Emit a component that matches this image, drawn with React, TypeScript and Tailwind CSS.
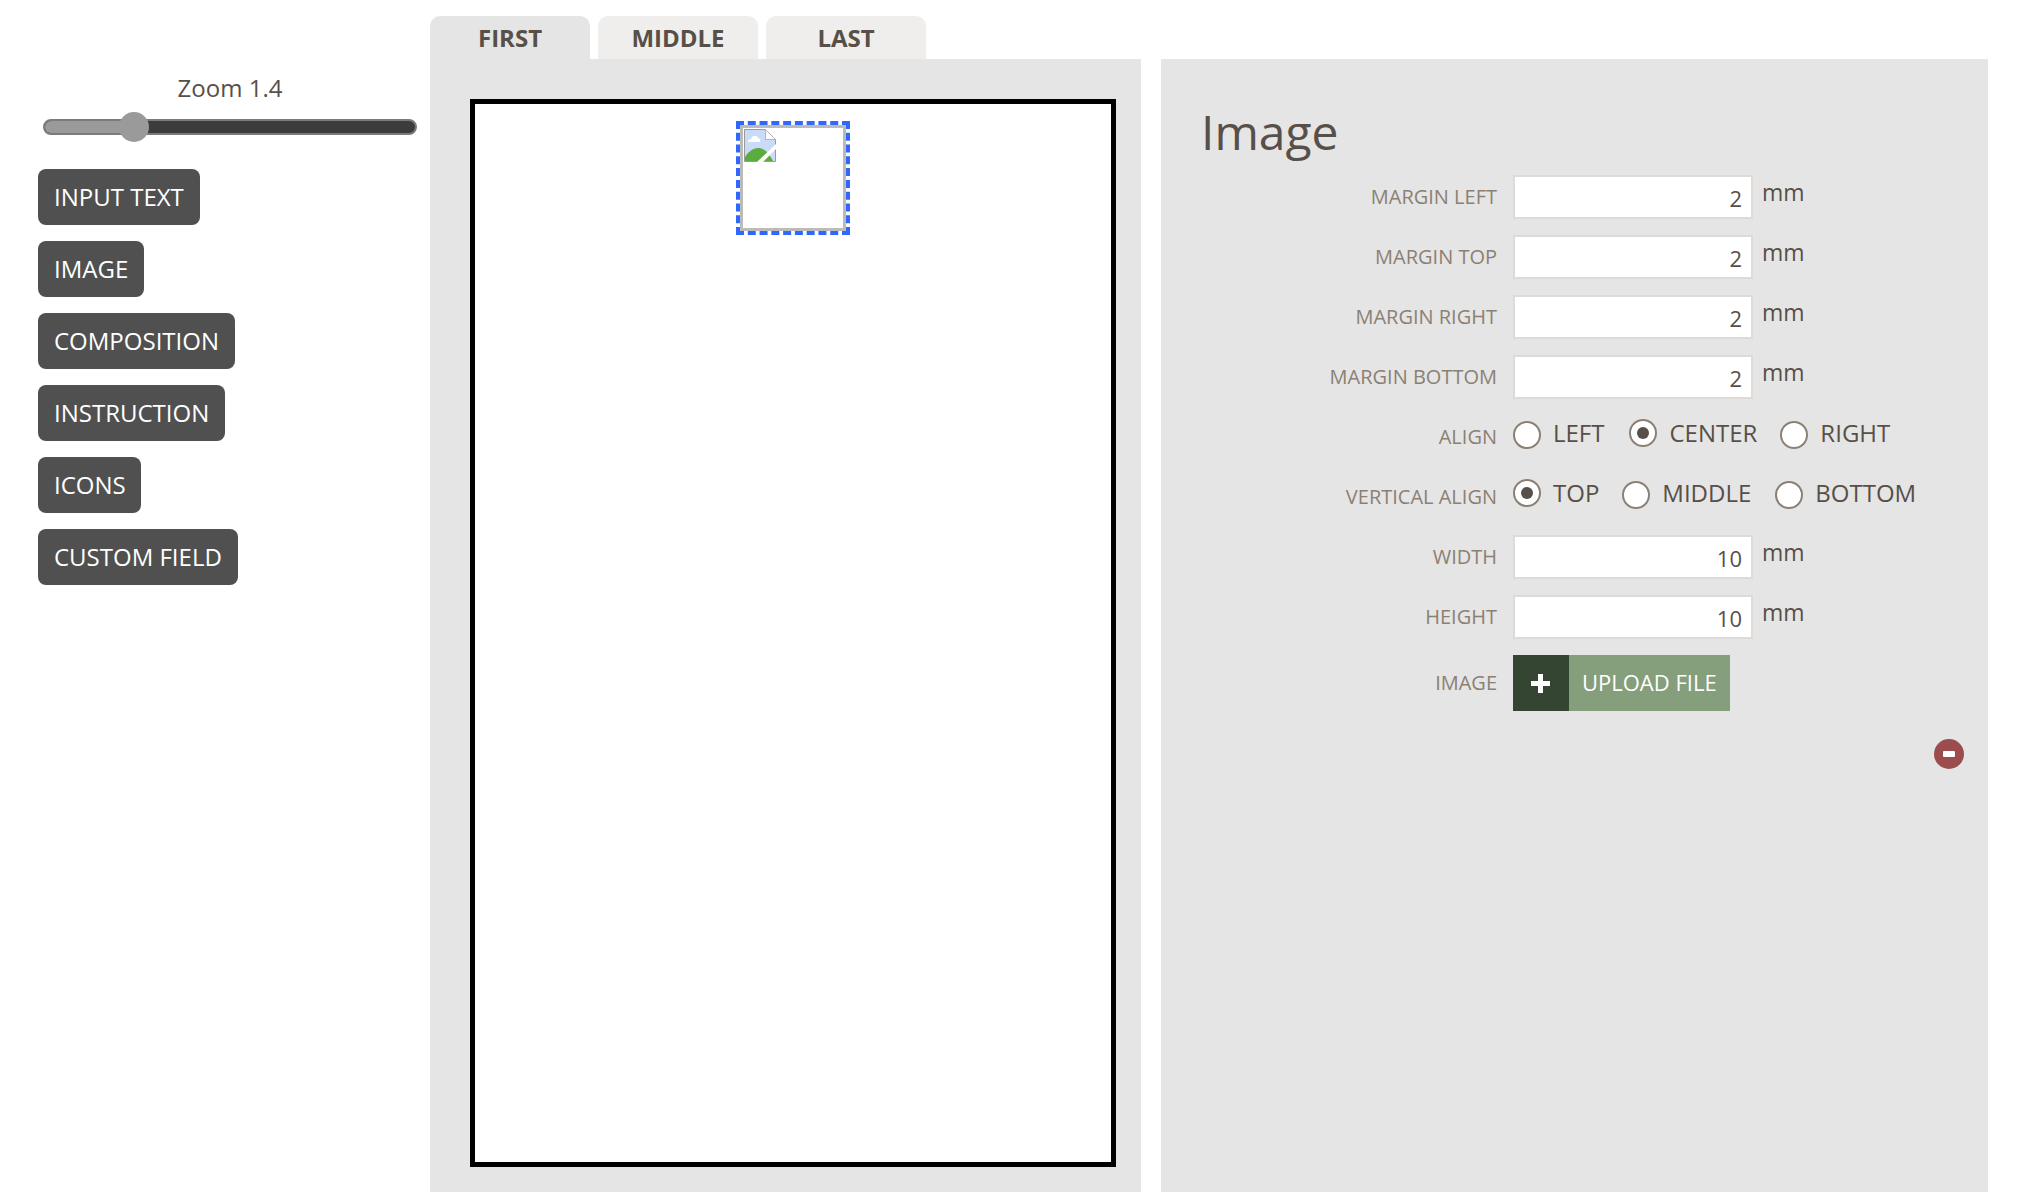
const font = "font-['Open_Sans',sans-serif]";

const SideButton = ({ label, w }: { label: string; w: string }) => (
  <button className={`${w} h-14 rounded-lg bg-[#4f504f] pl-4 text-left text-[24px] text-white`}>{label}</button>
);

const Tab = ({ label, active }: { label: string; active?: boolean }) => (
  <div className={`h-[43px] w-[160px] rounded-t-[10px] text-center text-[24px] leading-[43px] font-bold text-[#574f48] ${active ? "bg-[#e5e5e5]" : "bg-[#efeeec]"}`}>
    {label}
  </div>
);

const Label = ({ text }: { text: string }) => (
  <span className="w-[228px] shrink-0 text-right text-[20px] text-[#8c8074]">{text}</span>
);

const NumberRow = ({ label, value }: { label: string; value: string }) => (
  <div className="flex h-[60px] items-start">
    <div className="flex h-[44px] items-center">
      <Label text={label} />
    </div>
    <input
      readOnly
      value={value}
      className="ml-4 h-[44px] w-[240px] border-2 border-[#dfdad6] bg-white pt-[2px] pr-[9px] text-right text-[22px] text-[#574f48] outline-none"
    />
    <span className="ml-[9px] text-[23px] leading-[34px] text-[#574f48]">mm</span>
  </div>
);

const Radio = ({ text, checked, gap }: { text: string; checked?: boolean; gap: string }) => (
  <div className={`flex items-center ${gap}`}>
    <span className={`flex size-[28px] items-center justify-center rounded-full border-2 border-[#8c8074] bg-white ${checked ? "-mt-[2px]" : "mt-[2px]"}`}>
      {checked && <span className="size-3 rounded-full bg-[#574f48]" />}
    </span>
    <span className="-mt-[2px] ml-[12px] text-[24px] leading-[28px] text-[#574f48]">{text}</span>
  </div>
);

const RadioRow = ({ label, children }: { label: string; children: React.ReactNode }) => (
  <div className="flex h-[60px] items-start">
    <div className="flex h-[28px] items-center pt-2">
      <Label text={label} />
    </div>
    <div className="ml-4 flex">{children}</div>
  </div>
);

const BrokenImage = () => (
  <svg width="32" height="33" viewBox="0 0 32 33" className="block">
    <path d="M.5.5h21l10 10v22H.5z" fill="#c9dbf6" stroke="#9a9a9a" strokeWidth="1" />
    <path d="M21.5.5v10h10z" fill="#fff" stroke="#b5b5b5" strokeWidth="1" />
    <path d="M1 32v-4c3-5 8-9 13-9 6 0 11 5 15 13z" fill="#5aac3f" />
    <path d="M4 13c0-2 1-3 3-3 1-4 6-4 7-1 2 0 3 2 2 4z" fill="#fff" />
    <path d="M13 33l19-18v5L19 33z" fill="#fff" />
  </svg>
);

export default function App() {
  return (
    <div className={`${font} flex h-[1192px] w-[2020px] overflow-hidden bg-white`}>
      {/* left tools */}
      <div className="w-[430px] shrink-0 pt-[70px]">
        <div className="w-[460px] text-center text-[24px] leading-9 text-[#574f48]">Zoom 1.4</div>
        <div className="relative mt-[13px] ml-[43px] flex h-4 w-[374px] overflow-hidden rounded-full border-2 border-[#7b7b7b] bg-[#3c3c3c]">
          <div className="h-full w-[91px] bg-[#9a9a9a]" />
        </div>
        <div className="relative -mt-[23px] ml-[119px] size-[30px] rounded-full bg-[#9a9a9a]" />
        <div className="mt-[27px] ml-[38px] flex flex-col items-start gap-4">
          <SideButton label="INPUT TEXT" w="w-[162px]" />
          <SideButton label="IMAGE" w="w-[106px]" />
          <SideButton label="COMPOSITION" w="w-[197px]" />
          <SideButton label="INSTRUCTION" w="w-[187px]" />
          <SideButton label="ICONS" w="w-[103px]" />
          <SideButton label="CUSTOM FIELD" w="w-[200px]" />
        </div>
      </div>

      {/* page editor */}
      <div className="w-[711px] shrink-0 pt-4">
        <div className="flex gap-2">
          <Tab label="FIRST" active />
          <Tab label="MIDDLE" />
          <Tab label="LAST" />
        </div>
        <div className="h-[1133px] bg-[#e5e5e5] px-10 pt-10">
          <div className="h-[1068px] w-[646px] border-[5px] border-black bg-white pt-[17px]">
            <div className="mx-auto w-[114px] border-[4px] border-dashed border-[#2f67ff] bg-white">
              <div className="h-[106px] border-[3px] border-[#bbbbbb] p-[1px]">
                <BrokenImage />
              </div>
            </div>
          </div>
        </div>
      </div>

      {/* properties */}
      <div className="mt-[59px] ml-5 h-[1133px] w-[827px] shrink-0 bg-[#e5e5e5] pt-[38px]">
        <h1 className="ml-10 text-[48px] leading-[70px] text-[#574f48]">Image</h1>
        <div className="mt-[8px] ml-[108px]">
          <NumberRow label="MARGIN LEFT" value="2" />
          <NumberRow label="MARGIN TOP" value="2" />
          <NumberRow label="MARGIN RIGHT" value="2" />
          <NumberRow label="MARGIN BOTTOM" value="2" />
          <div className="pt-1">
            <RadioRow label="ALIGN">
              <Radio text="LEFT" gap="mr-[25px]" />
              <Radio text="CENTER" checked gap="mr-[23px]" />
              <Radio text="RIGHT" gap="" />
            </RadioRow>
            <RadioRow label="VERTICAL ALIGN">
              <Radio text="TOP" checked gap="mr-[23px]" />
              <Radio text="MIDDLE" gap="mr-[24px]" />
              <Radio text="BOTTOM" gap="" />
            </RadioRow>
          </div>
          <div className="-mt-[4px]">
            <NumberRow label="WIDTH" value="10" />
            <NumberRow label="HEIGHT" value="10" />
          </div>
          <div className="flex h-14 items-center">
            <Label text="IMAGE" />
            <div className="ml-4 flex h-14 w-[217px] items-center bg-[#859e7b]">
              <span className="flex h-14 w-14 items-center justify-center bg-[#344531] pr-[2px]">
                <svg width="19" height="19" viewBox="0 0 19 19"><path d="M7 0h5v7h7v5h-7v7H7v-7H0V7h7z" fill="#fff" /></svg>
              </span>
              <span className="-mt-[2px] ml-[13px] text-[22px] text-white">UPLOAD FILE</span>
            </div>
          </div>
        </div>
        <div className="mt-7 mr-6 flex justify-end">
          <span className="flex size-[30px] items-center justify-center rounded-full bg-[#9b4d4d]">
            <span className="h-[6px] w-3 rounded-[1px] bg-white" />
          </span>
        </div>
      </div>
    </div>
  );
}
